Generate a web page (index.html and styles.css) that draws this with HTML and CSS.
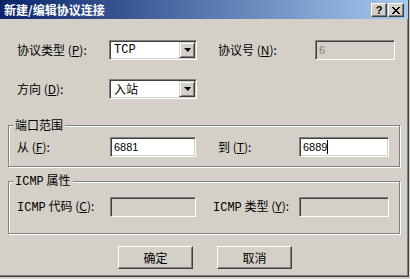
FILE: index.html
```html
<!DOCTYPE html>
<html lang="zh-CN">

<head>
  <meta charset="UTF-8">
  <title>新建/编辑协议连接</title>
  <link rel="stylesheet" href="styles.css">
</head>

<body>
  <div class="window">
    <div class="titlebar">
      <span class="title">新建/编辑协议连接</span>
      <div class="title-buttons">
        <span class="tbtn help">?</span>
        <span class="tbtn close">
          <svg width="8" height="7" viewBox="0 0 8 7">
            <path d="M0 0h2v1H0zM6 0h2v1H6zM1 1h2v1H1zM5 1h2v1H5zM2 2h4v1H2zM3 3h2v1H3zM2 4h4v1H2zM1 5h2v1H1zM5 5h2v1H5zM0 6h2v1H0zM6 6h2v1H6z" fill="#000"/>
          </svg>
        </span>
      </div>
    </div>

    <div class="content">
      <div class="row row-top">
        <label class="lbl">协议类型 (<u>P</u>):</label>
        <div class="combo">
          <span class="combo-text mono">TCP</span>
          <span class="drop"><i class="arrow"></i></span>
        </div>
        <label class="lbl lbl-right">协议号 (<u>N</u>):</label>
        <div class="field disabled">6</div>
      </div>

      <div class="row row-top row-second">
        <label class="lbl">方向 (<u>D</u>):</label>
        <div class="combo">
          <span class="combo-text">入站</span>
          <span class="drop"><i class="arrow"></i></span>
        </div>
      </div>

      <fieldset class="group group-ports">
        <legend>端口范围</legend>
        <div class="row row-group">
          <label class="lbl">从 (<u>F</u>):</label>
          <div class="field">6881</div>
          <label class="lbl lbl-to">到 (<u>T</u>):</label>
          <div class="field">6889<span class="caret"></span></div>
        </div>
      </fieldset>

      <fieldset class="group group-icmp">
        <legend><span class="mono">ICMP</span> 属性</legend>
        <div class="row row-group">
          <label class="lbl"><span class="mono">ICMP</span> 代码 (<u>C</u>):</label>
          <div class="field disabled"></div>
          <label class="lbl lbl-type"><span class="mono">ICMP</span> 类型 (<u>Y</u>):</label>
          <div class="field disabled"></div>
        </div>
      </fieldset>

      <div class="buttons">
        <button class="btn">确定</button>
        <button class="btn">取消</button>
      </div>
    </div>
  </div>
</body>

</html>
```

FILE: styles.css
```css
body {
  margin: 0;
  background-color: #d4d0c8;
  font-family: "Noto Sans CJK SC", sans-serif;
  font-size: 12px;
  color: #000;
}

.mono {
  font-family: "Liberation Mono", "Noto Sans CJK SC", monospace;
}

.window {
  width: 409px;
  height: 277px;
  box-sizing: border-box;
  background-color: #d4d0c8;
  border-right: 1px solid #404040;
  border-bottom: 1px solid #404040;
  box-shadow: inset -1px -1px 0 #808080;
}

/* title bar */
.titlebar {
  height: 19px;
  display: flex;
  align-items: center;
  justify-content: space-between;
  padding: 0 4px 0 4px;
  background: linear-gradient(to right, #0a246a, #a6caf0);
}

.title {
  color: #fff;
  font-weight: bold;
  font-size: 12px;
  line-height: 19px;
}

.title-buttons {
  display: flex;
  gap: 1px;
  padding-top: 1px;
}

.tbtn {
  width: 16px;
  height: 14px;
  box-sizing: border-box;
  display: flex;
  align-items: center;
  justify-content: center;
  background-color: #d4d0c8;
  border: 1px solid;
  border-color: #fff #404040 #404040 #fff;
  box-shadow: inset -1px -1px 0 #808080;
}

.help {
  font-family: "Liberation Sans", sans-serif;
  font-weight: bold;
  font-size: 11px;
  line-height: 12px;
}

/* body */
.content {
  padding-top: 21px;
}

.row {
  display: grid;
  align-items: center;
  height: 20px;
}

.row-top {
  padding-left: 17px;
  grid-template-columns: 92px 88px 118px 80px;
}

.row-second {
  margin-top: 19px;
}

.row-group {
  padding-left: 8px;
  grid-template-columns: 93px 86px 103px 90px;
}

.lbl {
  white-space: nowrap;
  line-height: 14px;
}

.lbl-right {
  padding-left: 21px;
}

.lbl-to {
  padding-left: 22px;
}

.lbl-type {
  padding-left: 17px;
}

.field,
.combo {
  height: 20px;
  box-sizing: border-box;
  background-color: #fff;
  border: 1px solid;
  border-color: #808080 #fff #fff #808080;
  box-shadow: inset 1px 1px 0 #404040, inset -1px -1px 0 #d4d0c8;
}

.field {
  padding: 0 3px;
  font-family: "Liberation Sans", sans-serif;
  font-size: 11px;
  line-height: 18px;
  display: flex;
  align-items: center;
}

.field.disabled {
  background-color: #d4d0c8;
  color: #808080;
}

.caret {
  display: inline-block;
  width: 1px;
  height: 14px;
  background-color: #000;
}

.combo {
  display: flex;
  align-items: center;
  justify-content: space-between;
  padding: 1px;
}

.combo-text {
  padding-left: 3px;
  line-height: 16px;
}

.drop {
  width: 16px;
  height: 16px;
  box-sizing: border-box;
  display: flex;
  align-items: center;
  justify-content: center;
  background-color: #d4d0c8;
  border: 1px solid;
  border-color: #d4d0c8 #404040 #404040 #d4d0c8;
  box-shadow: inset 1px 1px 0 #fff, inset -1px -1px 0 #808080;
}

.arrow {
  width: 0;
  height: 0;
  border-left: 4px solid transparent;
  border-right: 3px solid transparent;
  border-top: 4px solid #000;
}

/* group boxes */
.group {
  width: 392px;
  box-sizing: border-box;
  margin: 0 0 0 8px;
  padding: 0;
  border: 1px solid #808080;
  box-shadow: 1px 1px 0 #fff, inset 1px 1px 0 #fff;
}

.group legend {
  margin-left: 4px;
  padding: 0 2px;
  line-height: 14px;
  background-color: #d4d0c8;
}

.group-ports {
  margin-top: 19px;
  padding-top: 5px;
  padding-bottom: 9px;
}

.group-icmp {
  margin-top: 6px;
  padding-top: 8px;
  padding-bottom: 16px;
}

/* buttons */
.buttons {
  display: flex;
  gap: 24px;
  padding-left: 118px;
  margin-top: 12px;
}

.btn {
  width: 75px;
  height: 23px;
  box-sizing: border-box;
  font-family: "Noto Sans CJK SC", sans-serif;
  font-size: 12px;
  background-color: #d4d0c8;
  border: 1px solid;
  border-color: #fff #404040 #404040 #fff;
  box-shadow: inset -1px -1px 0 #808080;
  padding: 0;
}
```
